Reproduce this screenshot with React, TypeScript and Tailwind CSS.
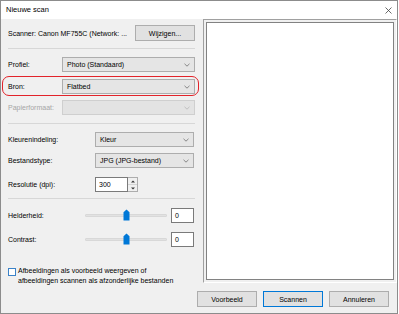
import { useState } from "react"

const font = "font-['Liberation_Sans','Noto_Sans',sans-serif]"

function Chevron({ light = false }: { light?: boolean }) {
  return (
    <svg width="6" height="4" viewBox="0 0 6 4" className="shrink-0">
      <polyline points="0.5,0.8 3,3.2 5.5,0.8" fill="none" stroke={light ? "#b5b5b5" : "#6d6d6d"} strokeWidth="0.8" />
    </svg>
  )
}

function Select({ value, width, disabled = false }: { value?: string; width: string; disabled?: boolean }) {
  return (
    <div
      className={`${width} h-[15px] flex items-center justify-between border pl-[4px] pr-[4px] ${
        disabled ? "bg-[#e3e3e3] border-[#cfcfcf]" : "bg-[#e5e5e5] border-[#adadad]"
      }`}
    >
      <span>{value}</span>
      <Chevron light={disabled} />
    </div>
  )
}

function Separator() {
  return <div className="h-px bg-[#d7d7d7]" />
}

function Slider({ label }: { label: string }) {
  return (
    <div className="h-[15px] flex items-center">
      <span className="w-[77px]">{label}</span>
      <div className="relative w-[82px] h-[3px] bg-[#e2e2e2] border border-[#d8d8d8] rounded-[1px]">
        {/* thumb */}
        <svg width="7" height="12" viewBox="0 0 7 12" className="absolute left-[37px] -top-[6px]">
          <path d="M0.5 3.2 L3.5 0.5 L6.5 3.2 V11.5 H0.5 Z" fill="#0078d7" />
        </svg>
      </div>
      <div className="ml-[4px] w-[23px] h-[15px] bg-white border border-[#7a7a7a] flex items-center pl-[3px]">0</div>
    </div>
  )
}

function Button({ children, primary = false, width }: { children: string; primary?: boolean; width: string }) {
  return (
    <div
      className={`${width} h-[16px] flex items-center justify-center bg-[#e1e1e1] border ${
        primary ? "border-[#0078d7]" : "border-[#adadad]"
      }`}
    >
      {children}
    </div>
  )
}

export default function App() {
  const [checked, setChecked] = useState(false)

  return (
    <div className={`${font} text-[7px] leading-none text-black w-[398px] h-[314px] border border-[#8c8c8c] bg-[#f0f0f0] flex flex-col`}>
      {/* Title bar */}
      <div className="h-[18px] bg-white flex items-center justify-between pl-[5px] pr-[4px]">
        <span className="text-[7.5px]">Nieuwe scan</span>
        <svg width="7" height="7" viewBox="0 0 7 7" className="mr-[1px]">
          <path d="M0.5 0.5 L6.5 6.5 M6.5 0.5 L0.5 6.5" stroke="#444" strokeWidth="0.8" />
        </svg>
      </div>

      <div className="flex-1 flex flex-col">
        <div className="flex items-start">
          {/* Settings column */}
          <div className="w-[202px] flex flex-col pl-[7px] pr-[8px]">
            <div className="mt-[6px] h-[16px] flex items-center justify-between">
              <span>Scanner: Canon MF755C (Network: ...</span>
              <Button width="w-[60px]">Wijzigen...</Button>
            </div>

            <div className="mt-[7px]">
              <Separator />
            </div>

            <div className="mt-[8px] flex items-center">
              <span className="w-[54px]">Profiel:</span>
              <Select value="Photo (Standaard)" width="w-[133px]" />
            </div>

            <div className="relative mt-[7px] flex items-center">
              <span className="w-[54px]">Bron:</span>
              <Select value="Flatbed" width="w-[133px]" />
              {/* highlight */}
              <div className="absolute -left-[6px] -right-[4px] -top-[3px] -bottom-[2px] border-[1.5px] border-[#e2232a] rounded-[7px]" />
            </div>

            <div className="mt-[6px] flex items-center">
              <span className="w-[54px] text-[#a6a6a6]">Papierformaat:</span>
              <Select width="w-[133px]" disabled />
            </div>

            <div className="mt-[8px]">
              <Separator />
            </div>

            <div className="mt-[8px] flex items-center">
              <span className="w-[87px]">Kleurenindeling:</span>
              <Select value="Kleur" width="w-[99px]" />
            </div>

            <div className="mt-[6px] flex items-center">
              <span className="w-[87px]">Bestandstype:</span>
              <Select value="JPG (JPG-bestand)" width="w-[99px]" />
            </div>

            <div className="mt-[9px] flex items-center">
              <span className="w-[87px]">Resolutie (dpi):</span>
              <div className="w-[33px] h-[15px] bg-white border border-[#7a7a7a] flex items-center pl-[3px]">300</div>
              <div className="w-[10px] h-[15px] flex flex-col border border-[#adadad] border-l-0 bg-[#f0f0f0]">
                <div className="flex-1 flex items-center justify-center border-b border-[#d4d4d4]">
                  <svg width="4" height="3" viewBox="0 0 4 3">
                    <path d="M0 2.5 L2 0.5 L4 2.5 Z" fill="#333" />
                  </svg>
                </div>
                <div className="flex-1 flex items-center justify-center">
                  <svg width="4" height="3" viewBox="0 0 4 3">
                    <path d="M0 0.5 L2 2.5 L4 0.5 Z" fill="#333" />
                  </svg>
                </div>
              </div>
            </div>

            <div className="mt-[6px]">
              <Separator />
            </div>

            <div className="mt-[9px]">
              <Slider label="Helderheid:" />
            </div>
            <div className="mt-[9px]">
              <Slider label="Contrast:" />
            </div>

            <label className="mt-[19px] flex items-start gap-[2px] leading-[10px]" onClick={() => setChecked(!checked)}>
              <span className="mt-[2px] w-[8px] h-[8px] shrink-0 bg-white border border-[#3b82c8] flex items-center justify-center text-[6px]">
                {checked ? "✓" : ""}
              </span>
              <span>
                Afbeeldingen als voorbeeld weergeven of
                <br />
                afbeeldingen scannen als afzonderlijke bestanden
              </span>
            </label>
          </div>

          {/* Preview */}
          <div className="w-[194px] h-[264px] border-t border-l border-r border-b border-t-[#a0a0a0] border-l-[#a0a0a0] border-r-white border-b-white p-[2px]">
            <div className="w-full h-full bg-white border border-[#828282]" />
          </div>
        </div>

        <div className="mt-[5px] flex justify-end gap-[6px] pr-[8px]">
          <Button width="w-[60px]">Voorbeeld</Button>
          <Button width="w-[60px]" primary>
            Scannen
          </Button>
          <Button width="w-[60px]">Annuleren</Button>
        </div>
      </div>
    </div>
  )
}
